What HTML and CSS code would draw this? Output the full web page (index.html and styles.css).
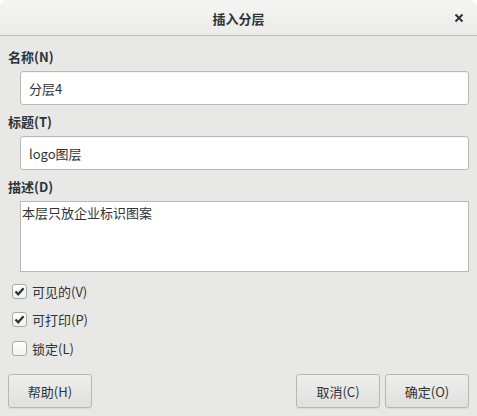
FILE: index.html
```html
<!DOCTYPE html>
<html lang="zh">
<head>
<meta charset="utf-8">
<title>插入分层</title>
<link rel="stylesheet" href="styles.css">
</head>
<body>
<div class="window">
  <div class="titlebar">
    <span class="title">插入分层</span>
    <span class="close">
      <svg width="10" height="10" viewBox="0 0 10 10"><path d="M1.5 1.5 L8.5 8.5 M8.5 1.5 L1.5 8.5" stroke="#2e3436" stroke-width="2" fill="none"/></svg>
    </span>
  </div>
  <div class="content">
    <div class="label">名称(N)</div>
    <div class="entry">分层4</div>
    <div class="label">标题(T)</div>
    <div class="entry">logo图层</div>
    <div class="label">描述(D)</div>
    <div class="textarea">本层只放企业标识图案</div>
    <div class="checks">
      <div class="check-row">
        <span class="box"><svg width="13" height="13" viewBox="0 0 13 13"><path d="M2.5 6.5 L5.2 9.3 L10.6 3.3" stroke="#2e3436" stroke-width="2.3" fill="none"/></svg></span>
        <span>可见的(V)</span>
      </div>
      <div class="check-row">
        <span class="box"><svg width="13" height="13" viewBox="0 0 13 13"><path d="M2.5 6.5 L5.2 9.3 L10.6 3.3" stroke="#2e3436" stroke-width="2.3" fill="none"/></svg></span>
        <span>可打印(P)</span>
      </div>
      <div class="check-row">
        <span class="box"></span>
        <span>锁定(L)</span>
      </div>
    </div>
    <div class="footer">
      <button class="btn">帮助(H)</button>
      <div class="spacer"></div>
      <button class="btn">取消(C)</button>
      <button class="btn">确定(O)</button>
    </div>
  </div>
</div>
</body>
</html>
```
FILE: styles.css
```css
html, body {
  margin: 0;
  padding: 0;
  background: #ffffff;
}
body {
  font-family: "Noto Sans CJK SC", "Noto Sans", sans-serif;
  font-size: 13px;
  color: #2e3436;
}
.window {
  width: 477px;
  height: 416px;
  display: flex;
  flex-direction: column;
  background: #e8e8e7;
  border-radius: 8px 8px 0 0;
  overflow: hidden;
  box-sizing: border-box;
}
.titlebar {
  height: 35px;
  flex: none;
  border-bottom: 1px solid #bdbdbb;
  background: linear-gradient(#f5f5f4, #ebebea);
  border-radius: 8px 8px 0 0;
  display: flex;
  align-items: center;
  justify-content: center;
  position: relative;
}
.title {
  font-weight: bold;
  font-size: 13px;
  line-height: 18px;
  margin-top: 3px;
}
.close {
  position: absolute;
  right: 13px;
  top: 13px;
  width: 10px;
  height: 10px;
  display: flex;
}
.content {
  flex: 1;
  display: flex;
  flex-direction: column;
  padding: 12px 8px 8px 8px;
}
.label {
  font-weight: bold;
  line-height: 18px;
  height: 18px;
  margin-bottom: 5px;
}
.entry {
  margin-left: 12px;
  height: 34px;
  box-sizing: border-box;
  border: 1px solid #bab9b6;
  border-radius: 3px;
  background: #ffffff;
  padding: 0 8px;
  display: flex;
  align-items: center;
  margin-bottom: 8px;
  box-shadow: inset 0 1px 1px rgba(0,0,0,0.04);
}
.textarea {
  margin-left: 12px;
  height: 71px;
  box-sizing: border-box;
  border: 1px solid #bab9b6;
  background: #ffffff;
  padding: 1px 1px;
  line-height: 20px;
}
.checks {
  margin-top: 5px;
  display: flex;
  flex-direction: column;
}
.check-row {
  height: 28.5px;
  display: flex;
  align-items: center;
  gap: 5px;
  padding-left: 4px;
}
.box {
  width: 15px;
  height: 15px;
  box-sizing: border-box;
  border: 1px solid #a9a9a6;
  border-radius: 3px;
  background: linear-gradient(#ffffff, #f0f0ef);
  display: flex;
  align-items: center;
  justify-content: center;
}
.footer {
  margin-top: auto;
  display: flex;
  gap: 5px;
}
.spacer {
  flex: 1;
}
.btn {
  width: 84px;
  height: 34px;
  box-sizing: border-box;
  border: 1px solid #b6b6b3;
  border-radius: 3px;
  background: linear-gradient(#eeeeed, #e0e0de);
  font-family: inherit;
  font-size: 13px;
  color: #2e3436;
  box-shadow: 0 1px 0 rgba(0,0,0,0.06);
  padding: 0;
}
```
